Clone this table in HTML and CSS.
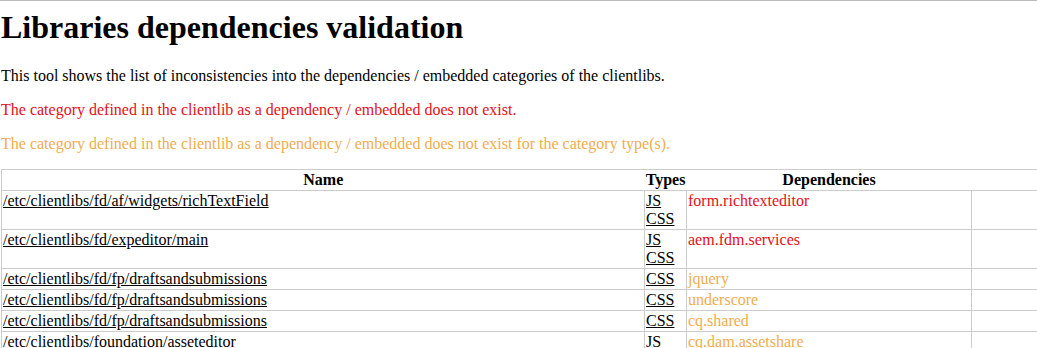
FILE: index.html
```html
<!DOCTYPE html>
<html>
<head>
<meta charset="utf-8">
<title>Libraries dependencies validation</title>
<link rel="stylesheet" href="styles.css">
</head>
<body>
<h1 class="title">Libraries dependencies validation</h1>
<p class="intro">This tool shows the list of inconsistencies into the dependencies / embedded categories of the clientlibs.</p>
<p class="missing">The category defined in the clientlib as a dependency / embedded does not exist.</p>
<p class="type-missing">The category defined in the clientlib as a dependency / embedded does not exist for the category type(s).</p>
<table class="deps">
  <colgroup>
    <col class="c-name">
    <col class="c-types">
    <col class="c-deps">
    <col class="c-extra">
  </colgroup>
  <thead>
    <tr><th>Name</th><th>Types</th><th>Dependencies</th><th></th></tr>
  </thead>
  <tbody>
    <tr>
      <td><a href="#">/etc/clientlibs/fd/af/widgets/richTextField</a></td>
      <td><a href="#">JS</a><br><a href="#">CSS</a></td>
      <td class="missing">form.richtexteditor</td>
      <td></td>
    </tr>
    <tr>
      <td><a href="#">/etc/clientlibs/fd/expeditor/main</a></td>
      <td><a href="#">JS</a><br><a href="#">CSS</a></td>
      <td class="missing">aem.fdm.services</td>
      <td></td>
    </tr>
    <tr>
      <td><a href="#">/etc/clientlibs/fd/fp/draftsandsubmissions</a></td>
      <td><a href="#">CSS</a></td>
      <td class="type-missing">jquery</td>
      <td></td>
    </tr>
    <tr>
      <td><a href="#">/etc/clientlibs/fd/fp/draftsandsubmissions</a></td>
      <td><a href="#">CSS</a></td>
      <td class="type-missing">underscore</td>
      <td></td>
    </tr>
    <tr>
      <td><a href="#">/etc/clientlibs/fd/fp/draftsandsubmissions</a></td>
      <td><a href="#">CSS</a></td>
      <td class="type-missing">cq.shared</td>
      <td></td>
    </tr>
    <tr>
      <td>/etc/clientlibs/foundation/asseteditor</td>
      <td>JS</td>
      <td class="type-missing">cq.dam.assetshare</td>
      <td></td>
    </tr>
  </tbody>
</table>
</body>
</html>
```

FILE: styles.css
```css
html {
  border-top: 1px solid #bbb;
}
body {
  margin: 0;
  padding: 0 0 0 1px;
  font-family: "Liberation Serif", "Times New Roman", serif;
  font-size: 16px;
  color: #000;
  background: #fff;
}
.title {
  font-size: 32px;
  font-weight: bold;
  margin: 8px 0 21.44px 0;
}
.intro,
.missing,
.type-missing {
  margin: 16px 0;
}
.missing {
  color: #e3101a;
}
.type-missing {
  color: #f0ad4e;
}
a {
  color: #000;
  text-decoration: underline;
}
.deps {
  border-collapse: collapse;
  table-layout: fixed;
  width: 100%;
  border-top: 1px solid #ccc;
  border-left: 1px solid #ccc;
}
.c-name { width: 643px; }
.c-types { width: 42px; }
.c-deps { width: 285px; }
.deps th {
  font-weight: bold;
  padding: 1px;
  text-align: center;
  border-bottom: 1px solid #ccc;
}
.deps td {
  padding: 1px;
  text-align: left;
  vertical-align: top;
  border-left: 1px solid #ccc;
  border-top: 1px solid #ccc;
}
```
